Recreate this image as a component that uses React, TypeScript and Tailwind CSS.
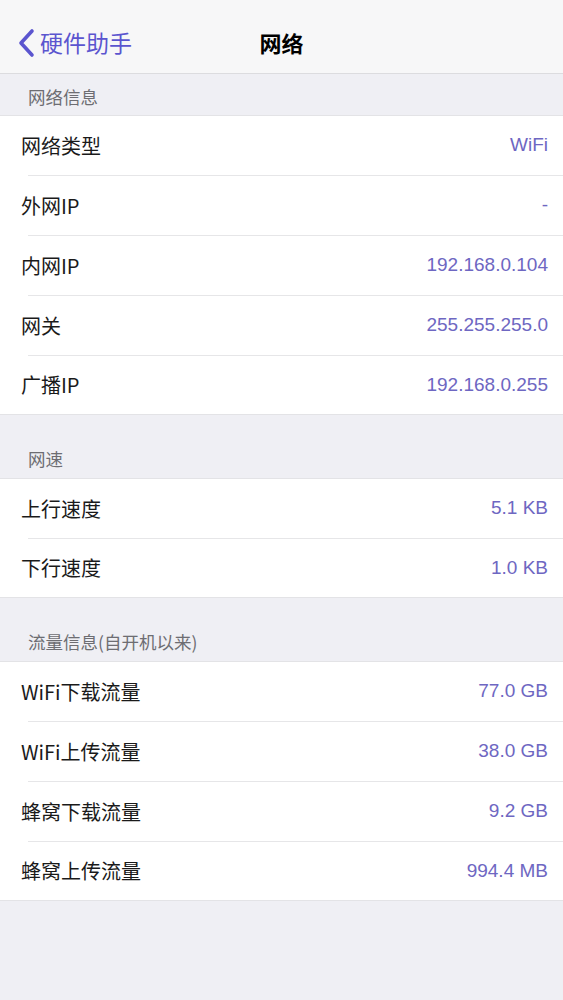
import React from "react";

type Row = { label: string; value: string };

const sections: { title: string; first?: boolean; rows: Row[] }[] = [
  {
    title: "网络信息",
    first: true,
    rows: [
      { label: "网络类型", value: "WiFi" },
      { label: "外网IP", value: "-" },
      { label: "内网IP", value: "192.168.0.104" },
      { label: "网关", value: "255.255.255.0" },
      { label: "广播IP", value: "192.168.0.255" },
    ],
  },
  {
    title: "网速",
    rows: [
      { label: "上行速度", value: "5.1 KB" },
      { label: "下行速度", value: "1.0 KB" },
    ],
  },
  {
    title: "流量信息(自开机以来)",
    rows: [
      { label: "WiFi下载流量", value: "77.0 GB" },
      { label: "WiFi上传流量", value: "38.0 GB" },
      { label: "蜂窝下载流量", value: "9.2 GB" },
      { label: "蜂窝上传流量", value: "994.4 MB" },
    ],
  },
];

export default function App() {
  return (
    <div
      className="min-h-[1000px] bg-[#efeff4]"
      style={{ fontFamily: '"Noto Sans CJK SC", "Liberation Sans", sans-serif' }}
    >
      {/* NAV BAR */}
      <div className="relative flex h-[74px] items-center pt-[12px] bg-[#f7f7f8] border-b border-[#dcdcdf]">
        <div className="flex items-center pl-[16px] text-[#5b55cf]">
          <svg width="20" height="32" viewBox="0 0 20 32" fill="none">
            <path d="M16 4 L5 16 L16 28" stroke="currentColor" strokeWidth="3.6" strokeLinecap="round" strokeLinejoin="round" />
          </svg>
          <span className="ml-[4px] text-[23px] leading-none">硬件助手</span>
        </div>
        <div className="absolute left-0 right-0 text-center text-[22px] font-bold text-black pointer-events-none">
          网络
        </div>
      </div>

      {sections.map((s) => (
        <div key={s.title}>
          <div
            className={`flex items-end px-[28px] text-[17.5px] leading-none text-[#6d6d72] ${
              s.first ? "h-[41px] pb-[10px]" : "h-[63px] pb-[11px]"
            }`}
          >
            {s.title}
          </div>
          <div className="bg-white border-y border-[#e3e3e6]">
            {s.rows.map((r, i) => (
              <div key={r.label} className="pl-[28px]">
                <div
                  className={`flex items-center justify-between pr-[15px] ${
                    i < s.rows.length - 1 ? "h-[60px] border-b border-[#e6e6e8]" : "h-[58px]"
                  }`}
                >
                  <span className="-ml-[7px] text-[20px] text-[#1a1a1a]">{r.label}</span>
                  <span
                    className="text-[19px] text-[#6e67c2]"
                    style={{ fontFamily: '"Liberation Sans", "Noto Sans CJK SC", sans-serif' }}
                  >
                    {r.value}
                  </span>
                </div>
              </div>
            ))}
          </div>
        </div>
      ))}
    </div>
  );
}
